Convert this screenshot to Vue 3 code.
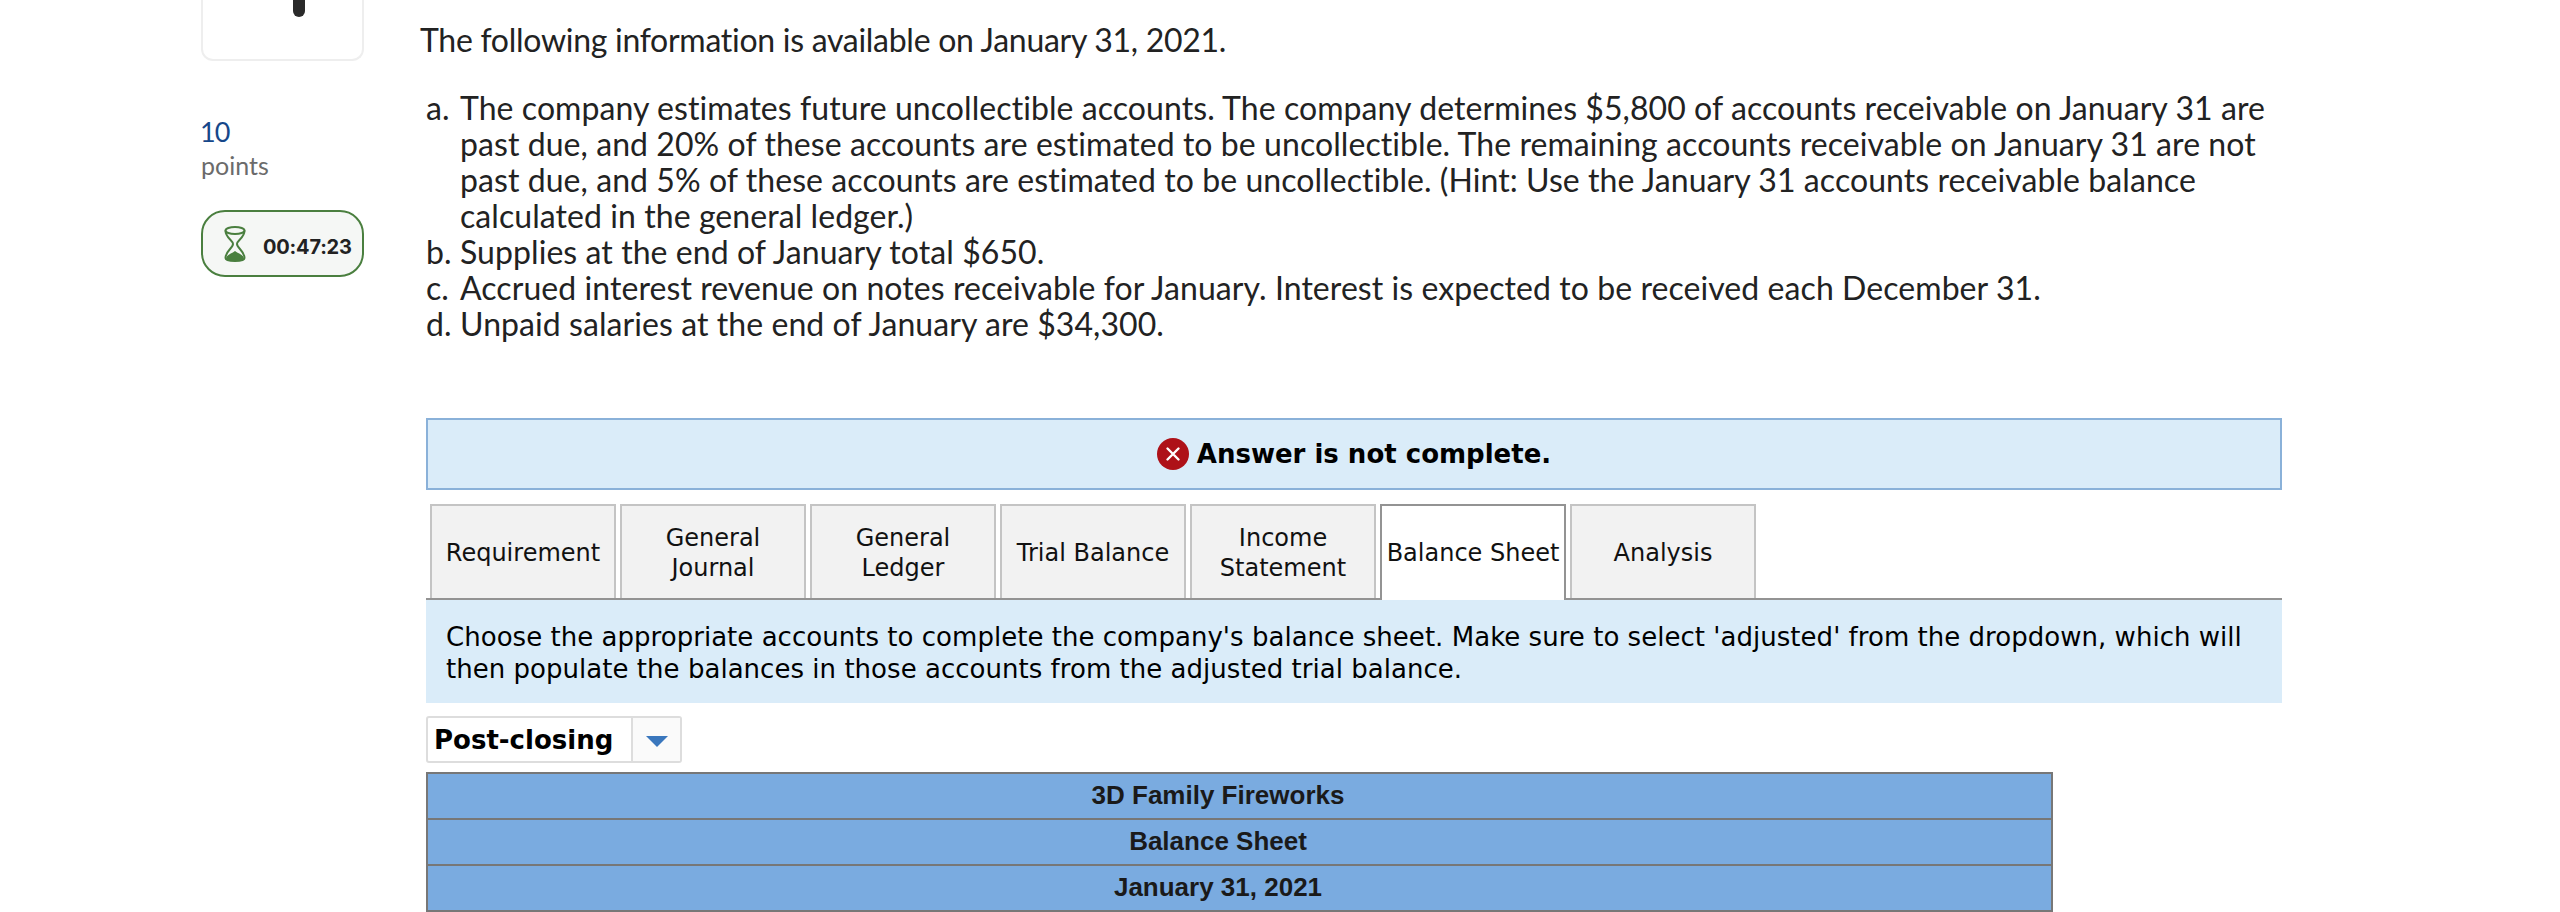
<script setup>
const items = [
  { m: 'a.', t: 'The company estimates future uncollectible accounts. The company determines $5,800 of accounts receivable on January 31 are past due, and 20% of these accounts are estimated to be uncollectible. The remaining accounts receivable on January 31 are not past due, and 5% of these accounts are estimated to be uncollectible. (Hint: Use the January 31 accounts receivable balance calculated in the general ledger.)' },
  { m: 'b.', t: 'Supplies at the end of January total $650.' },
  { m: 'c.', t: 'Accrued interest revenue on notes receivable for January. Interest is expected to be received each December 31.' },
  { m: 'd.', t: 'Unpaid salaries at the end of January are $34,300.' },
]
const tabs = [
  { l: ['Requirement'] },
  { l: ['General', 'Journal'] },
  { l: ['General', 'Ledger'] },
  { l: ['Trial Balance'] },
  { l: ['Income', 'Statement'] },
  { l: ['Balance Sheet'], active: true },
  { l: ['Analysis'] },
]
</script>

<template>
  <div class="page">
    <aside class="side">
      <div class="card"><span class="handle"></span></div>
      <div class="pts">10</div>
      <div class="ptl">points</div>
      <div class="timer">
        <svg class="glass" viewBox="0 0 22 36" width="22" height="36">
          <ellipse cx="11" cy="4.500" rx="9.500" ry="3.500" fill="none" stroke="#4a7f3f" stroke-width="2"/>
          <path d="M1.500 4.500C1.500 12 9 14 9 18C9 22 1.500 25 1.500 32C1.500 34 5 35 11 35C17 35 20.500 34 20.500 32C20.500 25 13 22 13 18C13 14 20.500 12 20.500 4.500" fill="none" stroke="#4a7f3f" stroke-width="2"/>
          <path d="M2 33C2 29 7 28 11 25C15 28 20 29 20 33C20 35 16 35 11 35C6 35 2 35 2 33Z" fill="#4a7f3f"/>
        </svg>
        <span class="time">00:47:23</span>
      </div>
    </aside>
    <main class="main">
      <p class="intro">The following information is available on January 31, 2021.</p>
      <ol class="list">
        <li v-for="i in items" :key="i.m" class="item"><span class="mark">{{ i.m }}</span><span>{{ i.t }}</span></li>
      </ol>
      <div class="alert">
        <svg class="x" viewBox="0 0 32 32" width="32" height="32">
          <circle cx="16" cy="16" r="16" fill="#ae1118"/>
          <path d="M10.500 10.500L21.500 21.500M21.500 10.500L10.500 21.500" stroke="#fff" stroke-width="2.400" stroke-linecap="round"/>
        </svg>
        <span>Answer is not complete.</span>
      </div>
      <div class="tabs">
        <div v-for="t in tabs" :key="t.l.join()" class="tab" :class="{ active: t.active }">
          <span v-for="x in t.l" :key="x">{{ x }}</span>
        </div>
      </div>
      <div class="instr">Choose the appropriate accounts to complete the company's balance sheet. Make sure to select 'adjusted' from the dropdown, which will then populate the balances in those accounts from the adjusted trial balance.</div>
      <div class="select">
        <span class="val">Post-closing</span>
        <span class="arrow"><i></i></span>
      </div>
      <div class="table">
        <div class="row">3D Family Fireworks</div>
        <div class="row">Balance Sheet</div>
        <div class="row">January 31, 2021</div>
      </div>
    </main>
  </div>
</template>

<style>
html, body { margin: 0; background: #fff; overflow: hidden; }
</style>

<style scoped>
.page { display: flex; height: 912px; overflow: hidden; font-family: Lato, sans-serif; font-variant-ligatures: none; color: #222; box-sizing: border-box; padding-left: 201px; }
.side { width: 163px; flex: none; display: flex; flex-direction: column; }
.card { height: 61px; box-sizing: border-box; border: 2px solid #eee; border-top: none; border-radius: 0 0 12px 12px; display: flex; justify-content: center; }
.handle { width: 12px; height: 17px; background: #2a2a2a; border-radius: 0 0 6px 6px; margin-left: 32px; }
.pts { margin-top: 56px; margin-left: -1px; font-size: 27px; line-height: 30px; letter-spacing: -1px; color: #16478a; }
.ptl { margin-top: 3px; font-size: 25px; line-height: 30px; color: #6b6b6b; }
.timer { margin-top: 30px; height: 67px; box-sizing: border-box; border: 2px solid #4a7f3f; border-radius: 24px; background: #f5f7f5; display: flex; align-items: center; padding-left: 21px; gap: 17px; }
.glass { flex: none; }
.time { font-family: Inter, sans-serif; font-weight: 700; font-size: 20px; letter-spacing: -0.2px; margin-top: 6px; white-space: nowrap; }
.main { width: 1856px; margin-left: 62px; flex: none; }
.intro { margin: 21px 0 0 -6px; font-size: 32px; line-height: 38px; letter-spacing: -0.28px; }
.list { list-style: none; margin: 31px 0 0; padding: 0; font-size: 32px; line-height: 36px; width: 1850px; letter-spacing: 0.07px; }
.item { display: flex; }
.mark { width: 34px; flex: none; }
.alert { margin-top: 76px; height: 72px; box-sizing: border-box; border: 2px solid #8ab1d9; background: #daecf9; display: flex; align-items: center; justify-content: center; gap: 8px; font-family: "DejaVu Sans", sans-serif; font-weight: 700; font-size: 26px; color: #000; }
.tabs { margin-top: 14px; height: 96px; box-sizing: border-box; border-bottom: 2px solid #939393; padding-left: 4px; display: flex; gap: 4px; font-family: "DejaVu Sans", sans-serif; font-size: 24px; line-height: 30px; color: #111; }
.tab { width: 186px; height: 94px; box-sizing: border-box; border: 2px solid #c4c4c4; border-bottom: none; padding-top: 2px; background: #f2f2f2; display: flex; flex-direction: column; align-items: center; justify-content: center; white-space: nowrap; }
.tab.active { height: 96px; padding-bottom: 2px; background: #fff; border-color: #939393; }
.instr { background: #daecf9; height: 103px; box-sizing: border-box; padding: 21px 20px 0; font-family: "DejaVu Sans", sans-serif; font-size: 26px; line-height: 32px; color: #000; letter-spacing: 0.03px; }
.select { margin-top: 13px; width: 256px; height: 47px; box-sizing: border-box; border: 2px solid #ddd; border-radius: 3px; display: flex; font-family: "DejaVu Sans", sans-serif; font-weight: 700; font-size: 26px; color: #000; }
.val { width: 205px; box-sizing: border-box; border-right: 2px solid #ddd; padding-left: 6px; line-height: 45px; white-space: nowrap; }
.arrow { flex: 1; background: #fafafa; display: flex; align-items: center; justify-content: center; }
.arrow i { width: 0; height: 0; border-left: 11px solid transparent; border-right: 11px solid transparent; border-top: 11px solid #3a77bd; margin-top: 3px; }
.table { margin-top: 9px; width: 1627px; box-sizing: border-box; border: 2px solid #777; background: #7aabe0; font-family: "Liberation Sans", sans-serif; font-weight: 700; font-size: 26px; color: #1a1a1a; text-align: center; }
.row { height: 44px; line-height: 42px; border-bottom: 2px solid #777; padding-right: 43px; }
.row:last-child { border-bottom: none; }
</style>
